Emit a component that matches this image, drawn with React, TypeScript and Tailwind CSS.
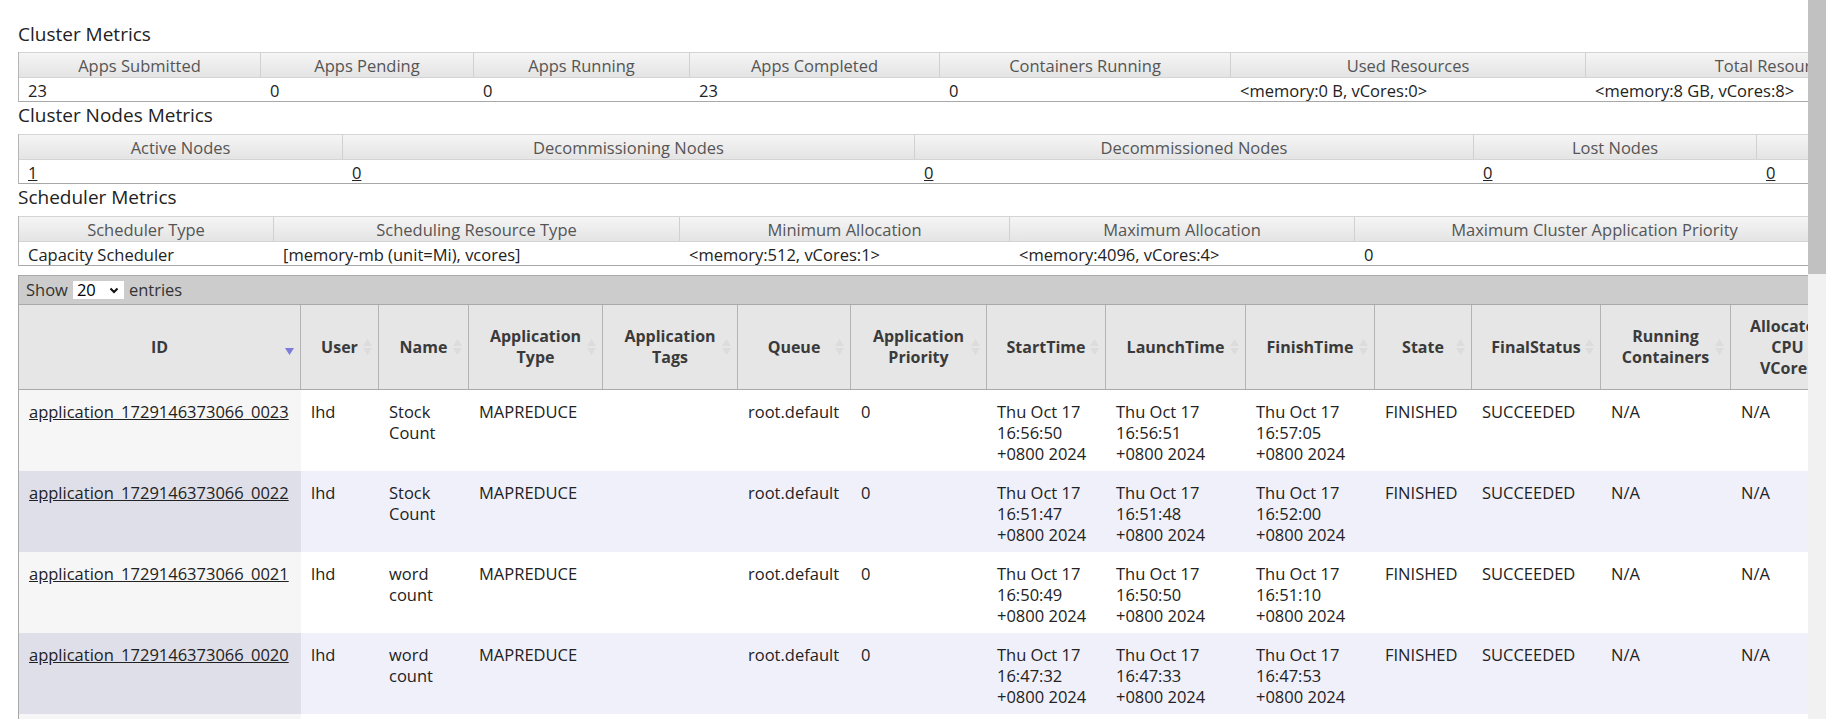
import React from "react";

type Metric = { title: string; w: string; value: string; link?: boolean };

const clusterMetrics: Metric[] = [
  { title: "Apps Submitted", w: "w-[242px]", value: "23" },
  { title: "Apps Pending", w: "w-[213px]", value: "0" },
  { title: "Apps Running", w: "w-[216px]", value: "0" },
  { title: "Apps Completed", w: "w-[250px]", value: "23" },
  { title: "Containers Running", w: "w-[291px]", value: "0" },
  { title: "Used Resources", w: "w-[355px]", value: "<memory:0 B, vCores:0>" },
  { title: "Total Resources", w: "w-[380px]", value: "<memory:8 GB, vCores:8>" },
  { title: "Reserved Resources", w: "w-[355px]", value: "<memory:0 B, vCores:0>" },
  { title: "Physical Mem Used %", w: "w-[220px]", value: "75" },
  { title: "Physical VCores Used %", w: "w-[220px]", value: "3" },
];

const nodeMetrics: Metric[] = [
  { title: "Active Nodes", w: "w-[324px]", value: "1", link: true },
  { title: "Decommissioning Nodes", w: "w-[572px]", value: "0", link: true },
  { title: "Decommissioned Nodes", w: "w-[559px]", value: "0", link: true },
  { title: "Lost Nodes", w: "w-[283px]", value: "0", link: true },
  { title: "Unhealthy Nodes", w: "w-[283px]", value: "0", link: true },
  { title: "Rebooted Nodes", w: "w-[283px]", value: "0", link: true },
  { title: "Shutdown Nodes", w: "w-[283px]", value: "0", link: true },
];

const schedulerMetrics: Metric[] = [
  { title: "Scheduler Type", w: "w-[255px]", value: "Capacity Scheduler" },
  { title: "Scheduling Resource Type", w: "w-[406px]", value: "[memory-mb (unit=Mi), vcores]" },
  { title: "Minimum Allocation", w: "w-[330px]", value: "<memory:512, vCores:1>" },
  { title: "Maximum Allocation", w: "w-[345px]", value: "<memory:4096, vCores:4>" },
  { title: "Maximum Cluster Application Priority", w: "w-[480px]", value: "0" },
];

const appCols = [
  { t: ["ID"], w: "w-[282px]" },
  { t: ["User"], w: "w-[78px]" },
  { t: ["Name"], w: "w-[90px]" },
  { t: ["Application", "Type"], w: "w-[134px]" },
  { t: ["Application", "Tags"], w: "w-[135px]" },
  { t: ["Queue"], w: "w-[113px]" },
  { t: ["Application", "Priority"], w: "w-[136px]" },
  { t: ["StartTime"], w: "w-[119px]" },
  { t: ["LaunchTime"], w: "w-[140px]" },
  { t: ["FinishTime"], w: "w-[129px]" },
  { t: ["State"], w: "w-[97px]" },
  { t: ["FinalStatus"], w: "w-[129px]" },
  { t: ["Running", "Containers"], w: "w-[130px]" },
  { t: ["Allocated", "CPU", "VCores"], w: "w-[114px]" },
  { t: ["Allocated", "Memory", "MB"], w: "w-[130px]" },
];

const apps = [
  { id: "0023", name: ["Stock", "Count"], start: "16:56:50", launch: "16:56:51", finish: "16:57:05" },
  { id: "0022", name: ["Stock", "Count"], start: "16:51:47", launch: "16:51:48", finish: "16:52:00" },
  { id: "0021", name: ["word", "count"], start: "16:50:49", launch: "16:50:50", finish: "16:51:10" },
  { id: "0020", name: ["word", "count"], start: "16:47:32", launch: "16:47:33", finish: "16:47:53" },
  { id: "0019", name: ["word", "count"], start: "16:45:10", launch: "16:45:11", finish: "16:45:30" },
];

const Title = ({ text, className }: { text: string; className: string }) => (
  <div className={`${className} text-[19px] leading-[24px] text-[#222]`}>{text}</div>
);

const MetricsTable = ({ cols }: { cols: Metric[] }) => (
  <div className="w-max border-l border-[#b5b5b5] text-[16.5px]">
    <div className="flex border-y border-[#d4d4d4] bg-linear-to-b from-[#f5f5f5] to-[#e4e4e4]">
      {cols.map((c) => (
        <div
          key={c.title}
          className={`${c.w} h-[24px] shrink-0 border-r border-[#d0d0d0] pt-[2px] text-center leading-[22px] text-[#555]`}
        >
          {c.title}
        </div>
      ))}
    </div>
    <div className="flex border-b border-[#a8a8a8] bg-white">
      {cols.map((c) => (
        <div key={c.title} className={`${c.w} h-[23px] shrink-0 px-[9px] pt-[2px] leading-[21px] text-[#222]`}>
          {c.link ? <span className="underline">{c.value}</span> : c.value}
        </div>
      ))}
    </div>
  </div>
);

const SortIcon = ({ active }: { active?: boolean }) => (
  <svg width="9" height="16" viewBox="0 0 9 16" className="absolute right-[6px] top-1/2 -translate-y-1/2">
    {!active && <polygon points="0,7 4.5,0 9,7" fill="#dcdcdc" />}
    <polygon points="0,9 4.5,16 9,9" fill={active ? "#7b7bdc" : "#dcdcdc"} />
  </svg>
);

const Lines = ({ lines }: { lines: string[] }) => (
  <>
    {lines.map((l) => (
      <div key={l}>{l}</div>
    ))}
  </>
);

const AppsTable = () => (
  <div className="w-max border-l border-[#a8a8a8]">
    <div className="flex h-[29px] items-center border-t border-[#a9a9a9] bg-[#cccccc] pl-[7px] text-[16.5px] text-[#333]">
      Show
      <div className="mx-[5px] flex h-[18px] w-[51px] items-center justify-between bg-white pl-[4px] pr-[5px] text-black">
        <span className="leading-[18px]">20</span>
        <svg width="10" height="7" viewBox="0 0 10 7">
          <path d="M1.5 1.5 L5 5 L8.5 1.5" stroke="#111" strokeWidth="2" fill="none" />
        </svg>
      </div>
      entries
    </div>
    <div className="flex border-y border-[#a9a9a9] bg-[#e6e6e6]">
      {appCols.map((c, i) => (
        <div
          key={c.t.join(" ")}
          className={`${c.w} relative flex h-[84px] shrink-0 flex-col items-center justify-center border-r border-[#b3b3b3] px-[14px] text-center font-bold leading-[21px] text-[#3a3a3a]`}
        >
          <Lines lines={c.t} />
          <SortIcon active={i === 0} />
        </div>
      ))}
    </div>
    {apps.map((a, r) => {
      const even = r % 2 === 1;
      const cells: string[][] = [
        ["lhd"],
        a.name,
        ["MAPREDUCE"],
        [],
        ["root.default"],
        ["0"],
        ["Thu Oct 17", a.start, "+0800 2024"],
        ["Thu Oct 17", a.launch, "+0800 2024"],
        ["Thu Oct 17", a.finish, "+0800 2024"],
        ["FINISHED"],
        ["SUCCEEDED"],
        ["N/A"],
        ["N/A"],
        ["N/A"],
      ];
      return (
        <div
          key={a.id}
          className={`flex text-[16.5px] leading-[21px] text-[#222] ${even ? "bg-[#f0f0fb]" : "bg-white"}`}
        >
          <div className={`w-[282px] h-[81px] shrink-0 pt-[11px] pl-[10px] ${even ? "bg-[#dfdfe9]" : "bg-[#f6f6f6]"}`}>
            <span className="underline">application_1729146373066_{a.id}</span>
          </div>
          {cells.map((lines, i) => (
            <div key={i} className={`${appCols[i + 1].w} h-[81px] shrink-0 pt-[11px] pl-[10px]`}>
              <Lines lines={lines} />
            </div>
          ))}
        </div>
      );
    })}
  </div>
);

export default function App() {
  return (
    <div className="flex h-[719px] w-full overflow-hidden bg-white font-['Open_Sans',sans-serif] text-[16px]">
      <div className="min-w-0 flex-1 overflow-hidden pl-[18px]">
        <Title text="Cluster Metrics" className="h-[52px] pt-[22px]" />
        <MetricsTable cols={clusterMetrics} />
        <Title text="Cluster Nodes Metrics" className="h-[32px] pt-[1px]" />
        <MetricsTable cols={nodeMetrics} />
        <Title text="Scheduler Metrics" className="h-[32px] pt-[1px]" />
        <MetricsTable cols={schedulerMetrics} />
        <div className="h-[9px]" />
        <AppsTable />
      </div>
      <div className="flex w-[18px] shrink-0 flex-col bg-[#f1f1f1]">
        <div className="h-[274px] bg-[#c1c1c1]" />
      </div>
    </div>
  );
}
